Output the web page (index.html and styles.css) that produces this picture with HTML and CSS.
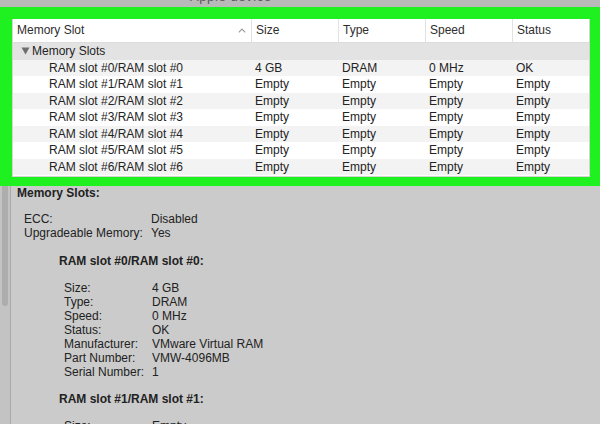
FILE: index.html
```html
<!DOCTYPE html>
<html>
<head>
<meta charset="utf-8">
<link rel="stylesheet" href="styles.css">
</head>
<body>
<div class="page">
  <div class="titlebar"><span class="title">Apple device</span></div>
  <div class="highlight">
    <div class="table">
      <div class="row head">
        <div class="cell first">Memory Slot<svg class="sort" width="8" height="5" viewBox="0 0 8 5"><path d="M0.8 4.3 L4 1 L7.2 4.3" fill="none" stroke="#9a9a9a" stroke-width="1.1"/></svg></div>
        <div class="cell">Size</div>
        <div class="cell">Type</div>
        <div class="cell">Speed</div>
        <div class="cell">Status</div>
      </div>
      <div class="row group">
        <div class="cell first"><svg class="tri" width="9" height="8" viewBox="0 0 9 8"><path d="M0.5 0.5 L8.5 0.5 L4.5 7.5 Z" fill="#6e6e6e"/></svg>Memory Slots</div>
        <div class="cell"></div><div class="cell"></div><div class="cell"></div><div class="cell"></div>
      </div>
      <div class="row alt">
        <div class="cell slot">RAM slot #0/RAM slot #0</div>
        <div class="cell">4 GB</div><div class="cell">DRAM</div><div class="cell">0 MHz</div><div class="cell">OK</div>
      </div>
      <div class="row">
        <div class="cell slot">RAM slot #1/RAM slot #1</div>
        <div class="cell">Empty</div><div class="cell">Empty</div><div class="cell">Empty</div><div class="cell">Empty</div>
      </div>
      <div class="row alt">
        <div class="cell slot">RAM slot #2/RAM slot #2</div>
        <div class="cell">Empty</div><div class="cell">Empty</div><div class="cell">Empty</div><div class="cell">Empty</div>
      </div>
      <div class="row">
        <div class="cell slot">RAM slot #3/RAM slot #3</div>
        <div class="cell">Empty</div><div class="cell">Empty</div><div class="cell">Empty</div><div class="cell">Empty</div>
      </div>
      <div class="row alt">
        <div class="cell slot">RAM slot #4/RAM slot #4</div>
        <div class="cell">Empty</div><div class="cell">Empty</div><div class="cell">Empty</div><div class="cell">Empty</div>
      </div>
      <div class="row">
        <div class="cell slot">RAM slot #5/RAM slot #5</div>
        <div class="cell">Empty</div><div class="cell">Empty</div><div class="cell">Empty</div><div class="cell">Empty</div>
      </div>
      <div class="row alt">
        <div class="cell slot">RAM slot #6/RAM slot #6</div>
        <div class="cell">Empty</div><div class="cell">Empty</div><div class="cell">Empty</div><div class="cell">Empty</div>
      </div>
    </div>
  </div>
  <div class="lower">
    <div class="scrollbar"><div class="thumb"></div></div>
    <div class="details">
      <div class="heading">Memory Slots:</div>
      <div class="kv top">
        <div>ECC:</div><div>Disabled</div>
        <div>Upgradeable Memory:</div><div>Yes</div>
      </div>
      <div class="subheading">RAM slot #0/RAM slot #0:</div>
      <div class="kv slotkv">
        <div>Size:</div><div>4 GB</div>
        <div>Type:</div><div>DRAM</div>
        <div>Speed:</div><div>0 MHz</div>
        <div>Status:</div><div>OK</div>
        <div>Manufacturer:</div><div>VMware Virtual RAM</div>
        <div>Part Number:</div><div>VMW-4096MB</div>
        <div>Serial Number:</div><div>1</div>
      </div>
      <div class="subheading">RAM slot #1/RAM slot #1:</div>
      <div class="kv slotkv">
        <div>Size:</div><div>Empty</div>
      </div>
    </div>
  </div>
</div>
</body>
</html>
```
FILE: styles.css
```css
html, body {
  margin: 0;
  padding: 0;
}
body {
  width: 600px;
  height: 424px;
  overflow: hidden;
  background: #cbcbcb;
  font-family: "Liberation Sans", Arial, sans-serif;
  font-size: 12px;
  color: #232323;
}
.page {
  display: flex;
  flex-direction: column;
  height: 424px;
}
.titlebar {
  height: 7px;
  overflow: hidden;
  background: #b9b9b9;
  padding-left: 190px;
}
.title {
  display: block;
  margin-top: -10px;
  line-height: 14px;
  font-size: 13px;
  color: #5a5a5a;
  letter-spacing: 0.6px;
}
.highlight {
  background: #1ff01f;
  padding: 12px 10px 9px 12px;
}
.table {
  background: #ffffff;
  border: 1px solid #d4d4d4;
  border-top: none;
  padding-bottom: 1px;
}
.row {
  display: grid;
  grid-template-columns: 238px 87px 87px 87px 1fr;
  height: 16.5px;
  line-height: 16.5px;
}
.row.alt {
  background: #f3f3f3;
}
.row.head {
  height: 23px;
  line-height: 23px;
  border-bottom: 1px solid #dcdcdc;
  color: #2e2e2e;
}
.row.head .cell {
  border-left: 1px solid #e2e2e2;
}
.row.head .cell.first {
  border-left: none;
  padding-left: 4px;
  display: flex;
  align-items: center;
  justify-content: space-between;
  padding-right: 5px;
}
.sort {
  display: block;
}
.row.group {
  background: #e3e3e3;
}
.row.group .cell.first {
  display: flex;
  align-items: center;
  padding-left: 8px;
  gap: 2px;
}
.tri {
  display: block;
}
.cell {
  padding-left: 3px;
  white-space: nowrap;
  overflow: hidden;
}
.row .cell:not(.first):not(.slot) {
  padding-left: 4px;
}
.cell.slot {
  padding-left: 36px;
}
.lower {
  flex: 1;
  display: flex;
  min-height: 0;
}
.scrollbar {
  width: 11px;
  background: #c3c3c3;
  border-right: 1px solid #a9a9a9;
  padding-left: 2px;
  box-sizing: border-box;
}
.thumb {
  width: 6px;
  height: 120px;
  background: #adadad;
  border-radius: 0 0 3px 3px;
}
.details {
  padding-left: 6px;
  line-height: 14px;
  color: #222;
}
.heading {
  font-weight: bold;
}
.kv {
  display: grid;
}
.kv.top {
  margin-top: 12px;
  margin-left: 7px;
  grid-template-columns: 127px auto;
}
.subheading {
  font-weight: bold;
  margin-top: 14px;
  margin-left: 42px;
}
.kv.slotkv {
  margin-top: 13px;
  margin-left: 47px;
  grid-template-columns: 88px auto;
}
.kv.slotkv + .subheading {
  margin-top: 13px;
}
```
